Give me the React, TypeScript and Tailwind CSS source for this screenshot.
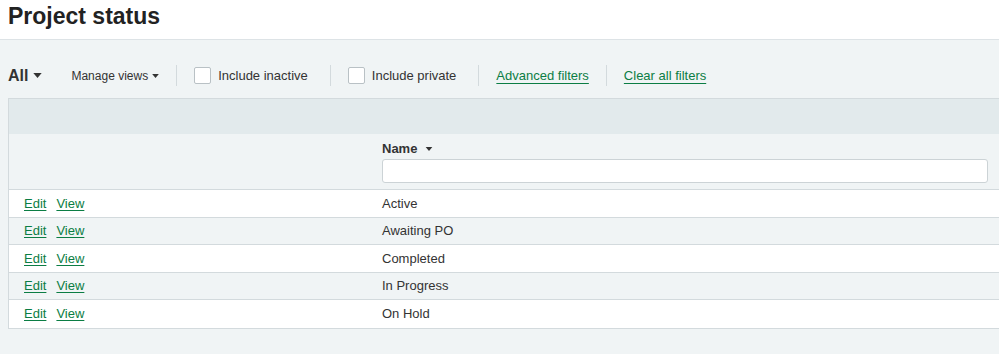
import React from 'react';

const STATUSES = ['Active', 'Awaiting PO', 'Completed', 'In Progress', 'On Hold'];

const Caret = ({ className = '' }: { className?: string }) => (
  <svg viewBox="0 0 10 6" className={className} fill="currentColor">
    <path d="M0 0h10L5 6z" />
  </svg>
);

const Divider = () => <div className="mx-[17px] h-[21px] w-px bg-[#d3dadd]" />;

const Check = ({ label }: { label: string }) => (
  <label className="flex items-center gap-[7px] pr-[5px] text-[13px] text-[#333]">
    <span className="h-[17px] w-[17px] rounded-[2px] border border-[#b9c1c5] bg-white" />
    {label}
  </label>
);

export default function App() {
  return (
    <div className="min-h-[354px] w-[999px] overflow-hidden bg-[#f0f4f5] font-['Liberation_Sans',Arial,sans-serif]">
      {/* Заголовок */}
      <div className="h-[40px] border-b border-[#dde3e6] bg-white px-[8px] pt-[2px]">
        <h1 className="text-[23px] font-bold leading-[28px] text-[#222]">Project status</h1>
      </div>

      {/* Панель фильтров */}
      <div className="flex h-[58px] items-center pl-[8px] pt-[13px]">
        <button className="flex items-center gap-[5px] text-[16px] font-bold text-[#333]">
          All <Caret className="h-[5px] w-[9px]" />
        </button>
        <button className="ml-[29px] flex items-center gap-[4px] text-[12px] text-[#333]">
          Manage views <Caret className="h-[4px] w-[7px]" />
        </button>
        <Divider />
        <Check label="Include inactive" />
        <Divider />
        <Check label="Include private" />
        <Divider />
        <a className="text-[13px] text-[#0b7d44] underline underline-offset-[3px]">Advanced filters</a>
        <Divider />
        <a className="text-[13px] text-[#0b7d44] underline underline-offset-[3px]">Clear all filters</a>
      </div>

      {/* Таблица */}
      <div className="ml-[8px] w-[1000px] border-l border-t border-b border-[#d3dadd] text-[13px] text-[#333]">
        <div className="h-[35px] bg-[#e2eaec]" />
        <div className="flex h-[56px] border-b border-[#d3dadd] bg-[#f0f4f5]">
          <div className="w-[364px]" />
          <div className="flex flex-1 flex-col pl-[9px] pr-[11px] pt-[5px]">
            <div className="flex items-center gap-[8px] font-bold">
              Name <Caret className="h-[4px] w-[8px]" />
            </div>
            <input className="mt-[0px] h-[24px] w-[606px] rounded-[3px] border border-[#ccd3d6] bg-white" />
          </div>
        </div>
        {STATUSES.map((s, i) => (
          <div
            key={s}
            className={`flex h-[27.5px] items-center ${i < STATUSES.length - 1 ? 'border-b border-[#d3dadd]' : ''} ${i % 2 ? 'bg-[#f0f4f5]' : 'bg-white'}`}
          >
            <div className="flex w-[364px] gap-[10px] pl-[15px] text-[#0b7d44]">
              <a className="underline underline-offset-[2px]">Edit</a>
              <a className="underline underline-offset-[2px]">View</a>
            </div>
            <div className="pl-[9px]">{s}</div>
          </div>
        ))}
      </div>
    </div>
  );
}
